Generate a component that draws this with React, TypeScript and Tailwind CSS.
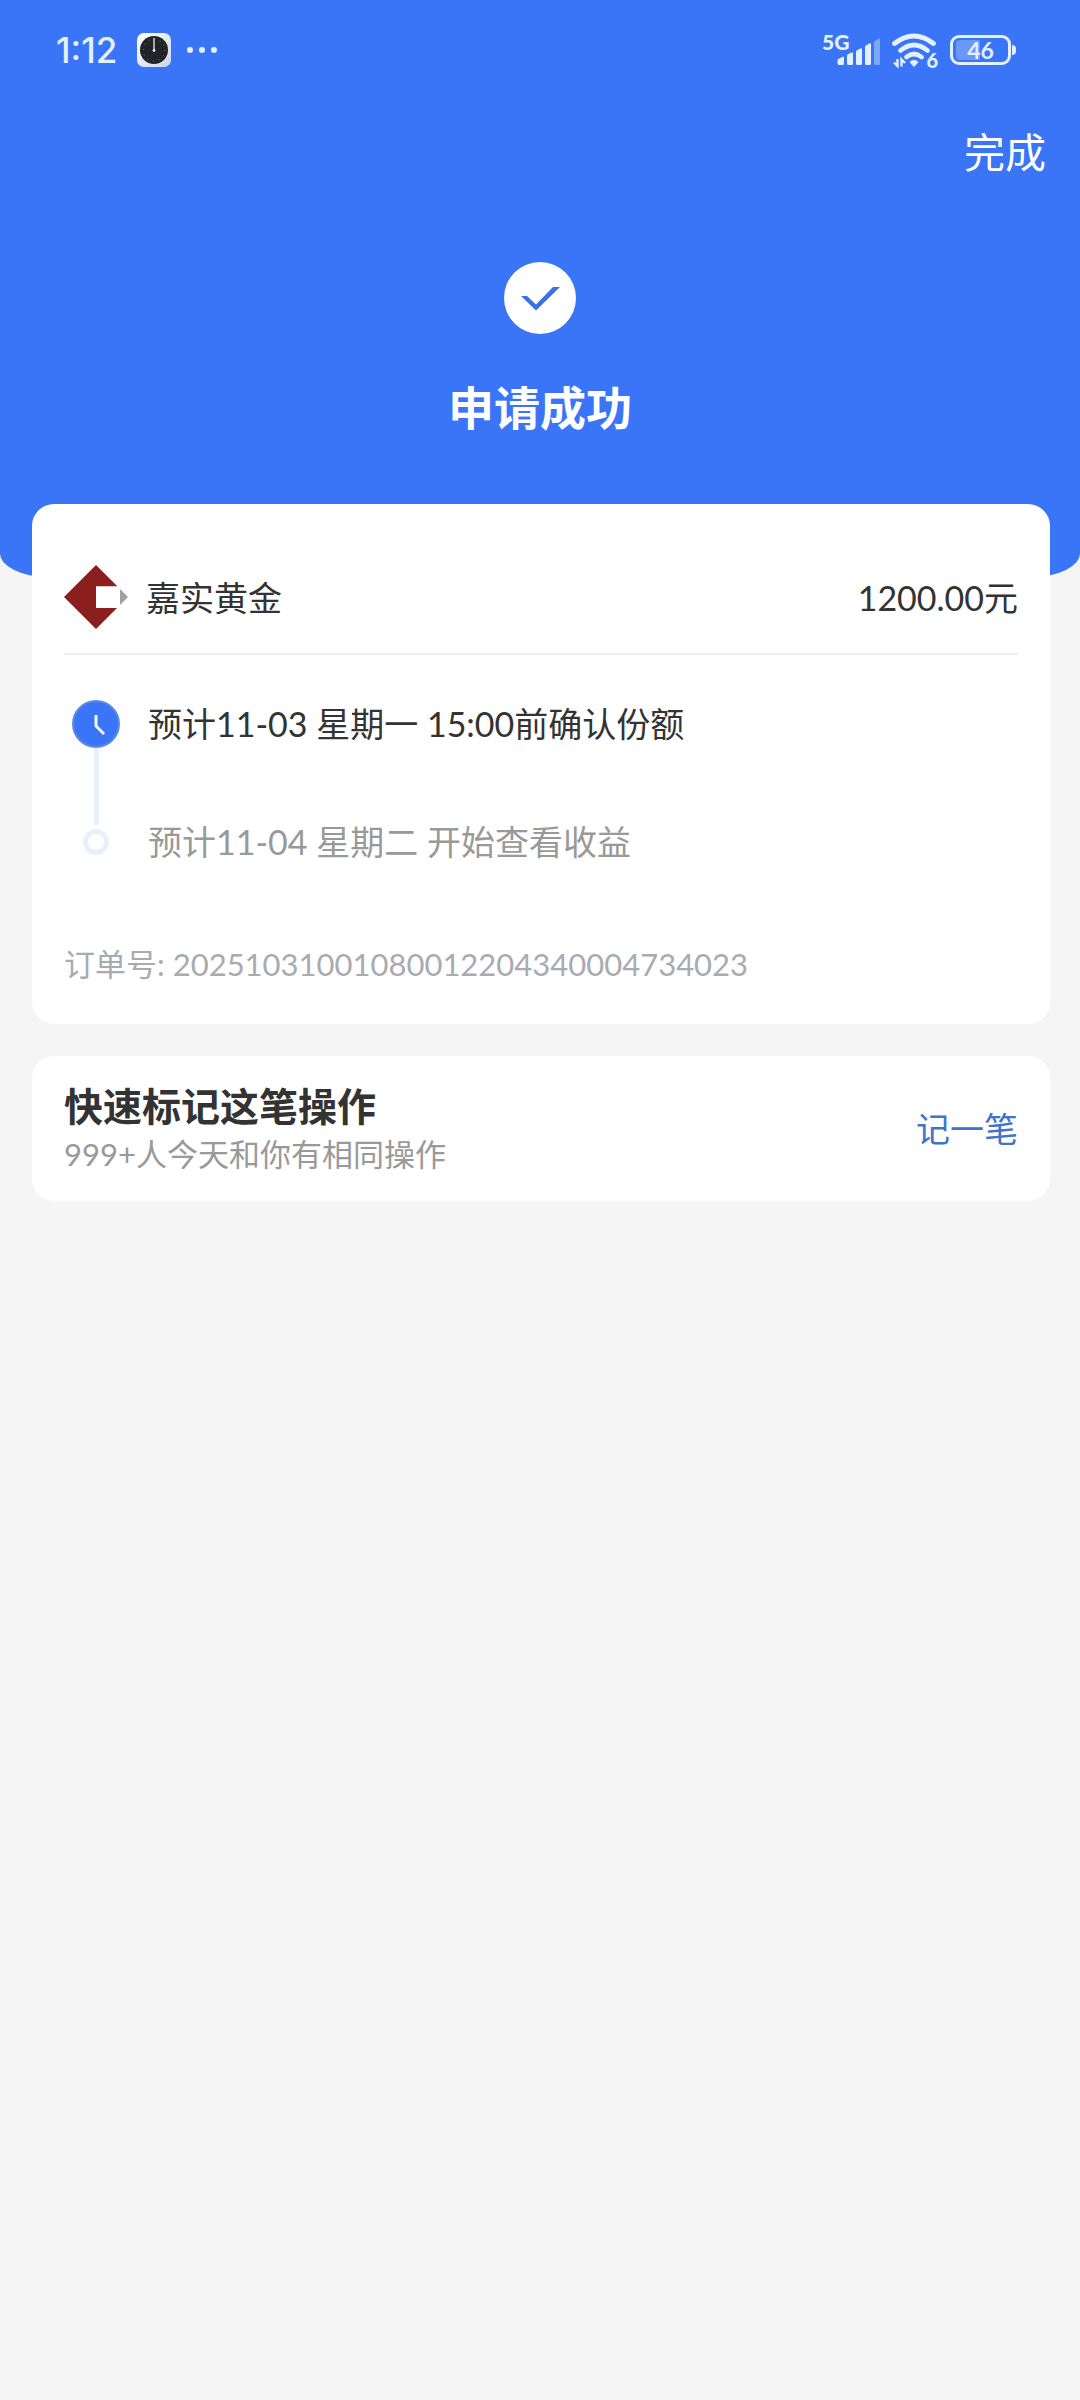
import React from 'react';

const steps = [
  { text: '预计11-03 星期一 15:00前确认份额', active: true },
  { text: '预计11-04 星期二 开始查看收益', active: false },
];

function AppBadge() {
  return (
    <svg width="34" height="34" viewBox="0 0 34 34" aria-hidden="true">
      <defs>
        <linearGradient id="badge" x1="0" y1="0" x2="1" y2="1">
          <stop offset="0" stopColor="#ffffff" />
          <stop offset="1" stopColor="#c9d6ee" />
        </linearGradient>
      </defs>
      <rect width="34" height="34" rx="7" fill="url(#badge)" />
      <circle cx="17" cy="17" r="14" fill="#222326" />
      <circle cx="17" cy="17" r="11" fill="none" stroke="#8b8d92" strokeWidth="0.9" strokeDasharray="0.9 4.86" />
      <path d="M17 5v13" stroke="#c4c6ca" strokeWidth="1.6" />
      <circle cx="17" cy="17.5" r="1.4" fill="#e8e8e8" />
    </svg>
  );
}

function Signal() {
  return (
    <div className="relative h-9 w-[58px]">
      <span className="absolute left-0 top-0 text-[21px] leading-[20px] font-black">5G</span>
      <svg className="absolute inset-0" width="58" height="36" viewBox="0 0 58 36" fill="#e3f0ff" aria-hidden="true">
        <path d="M15.500 31v-2.500q0-1 1-1.400l4-2.300q1.500-.6 1.500 1v5.700q0 1.500-1.500 1.500h-3.500q-1.500 0-1.500-2z" />
        <path d="M25 31.500v-7.500q0-1.200 1-1.700l3.400-1.700q1.600-.6 1.600 1v9.900q0 1.500-1.500 1.500h-3q-1.500 0-1.500-1.500z" />
        <path d="M34 31.500v-11.500q0-1.200 1-1.700l3.400-1.900q1.600-.6 1.600 1v14.100q0 1.500-1.500 1.500h-3q-1.500 0-1.500-1.500z" />
        <path d="M43 31.500v-16.300q0-1.200 1-1.700l3.400-2.100q1.600-.6 1.600 1v19.100q0 1.500-1.500 1.500h-3q-1.500 0-1.500-1.500z" />
        <path opacity=".4" d="M52 31.500v-20.800q0-1.200 1-1.800l3.400-2.200q1.600-.6 1.600 1v23.800q0 1.500-1.500 1.500h-3q-1.500 0-1.500-1.500z" />
      </svg>
    </div>
  );
}

function Wifi() {
  return (
    <div className="relative h-9 w-[46px]">
      <svg width="44" height="36" viewBox="0 0 44 36" fill="none" stroke="#e3f0ff" aria-hidden="true">
        <path d="M2.500 11.500q19.500-15 39 0" strokeWidth="4.800" strokeLinecap="round" />
        <path d="M8.500 18.500q13.500-11 27 0" strokeWidth="4.800" strokeLinecap="round" />
        <path d="M14.500 25q7.500-6 15 0" strokeWidth="4.800" strokeLinecap="round" />
        <path d="M18.500 30q3.500-2.500 7 0l-3.500 4z" fill="#e3f0ff" strokeWidth="1.500" strokeLinejoin="round" />
        <path d="M5.500 27v7l-3.500-3.500M9.500 34.500v-7l3.500 3.500" strokeWidth="2.400" />
      </svg>
      <span className="absolute right-0 bottom-0 text-[20px] leading-[16px] font-black">6</span>
    </div>
  );
}

function Battery() {
  return (
    <div className="flex items-center gap-px">
      <div className="relative flex h-[30px] w-[61px] items-center justify-center rounded-[9px] border-[3px] border-[#e3f0ff]">
        <span className="absolute inset-y-[2px] left-[3px] w-6 rounded-l-[4px] bg-white/25" />
        <span className="relative text-[23px] leading-none font-bold">46</span>
      </div>
      <span className="h-[10px] w-1 rounded-r-full bg-[#e3f0ff]" />
    </div>
  );
}

function StatusBar() {
  return (
    <div className="flex h-[100px] items-center justify-between pr-16 pl-14 text-[#e3f0ff]">
      <div className="flex items-center gap-4">
        <span className="pr-1 font-['Inter',sans-serif] text-[35px] leading-none font-medium">1:12</span>
        <AppBadge />
        <div className="flex gap-[6px]">
          <span className="size-[6px] rounded-full bg-[#e3f0ff]" />
          <span className="size-[6px] rounded-full bg-[#e3f0ff]" />
          <span className="size-[6px] rounded-full bg-[#e3f0ff]" />
        </div>
      </div>
      <div className="flex items-center gap-3">
        <Signal />
        <Wifi />
        <Battery />
      </div>
    </div>
  );
}

function FundLogo() {
  return (
    <svg width="64" height="64" viewBox="0 0 64 64" aria-hidden="true">
      <path d="M32 0 53.300 21.300H32V43H53L32 64 0 32z" fill="#8b1f1e" />
      <path d="M56 24l8 8-8 8z" fill="#a0a0a0" />
    </svg>
  );
}

export default function App() {
  return (
    <div className="min-h-screen bg-[#f5f5f5] font-['Lato','Noto_Sans_CJK_SC',sans-serif] text-[#333]">
      <header className="rounded-b-[48px_24px] bg-[#3975f6] pb-[139px] text-white">
        <StatusBar />
        <div className="flex justify-end px-[34px]">
          <button type="button" className="h-[106px] text-[41px] leading-[106px]">完成</button>
        </div>
        <div className="flex flex-col items-center pt-14">
          <svg width="72" height="72" viewBox="0 0 72 72" aria-hidden="true">
            <circle cx="36" cy="36" r="36" fill="#fff" />
            <path d="M17 34h6l9 8.500L49 25h7L32 48.500z" fill="#3b72dc" />
          </svg>
          <h1 className="mt-11 text-[46px] leading-[60px] font-bold">申请成功</h1>
        </div>
      </header>

      <main className="-mt-[73px] space-y-8 pr-[30px] pl-8">
        <section className="rounded-[22px] bg-white px-8 pb-9">
          <div className="flex h-[151px] items-center justify-between border-b-2 border-[#eee] pt-[37px] text-[34px]">
            <div className="flex items-center gap-[18px]">
              <FundLogo />
              <h2>嘉实黄金</h2>
            </div>
            <span>1200.00元</span>
          </div>

          <ol className="pt-[45px] text-[34px] leading-[48px]">
            {steps.map((step) => (
              <li key={step.text} className="flex gap-7 pl-2">
                <div className="flex w-12 flex-col items-center">
                  {step.active ? (
                    <>
                      <svg className="shrink-0" width="48" height="48" viewBox="0 0 48 48" aria-hidden="true">
                        <circle cx="24" cy="24" r="23" fill="#3975f6" stroke="#5f8be0" strokeWidth="2" />
                        <path d="M24 15v11l8 8" fill="none" stroke="#f0f6ff" strokeWidth="3" />
                      </svg>
                      <span className="-mb-[7px] w-[5px] grow bg-[#e8f0fc]" />
                    </>
                  ) : (
                    <span className="mt-[11px] size-[26px] rounded-full border-[5px] border-[#e8f0fc]" />
                  )}
                </div>
                <p className={step.active ? 'pb-[70px]' : 'text-[#999]'}>{step.text}</p>
              </li>
            ))}
          </ol>

          <p className="mt-[74px] text-[31px] leading-[48px] text-[#a8abb0]">订单号: 20251031001080012204340004734023</p>
        </section>

        <section className="flex items-center justify-between rounded-[22px] bg-white px-8 py-6">
          <div>
            <h2 className="text-[39px] leading-[52px] font-bold">快速标记这笔操作</h2>
            <p className="text-[31px] leading-[45px] text-[#999]">999+人今天和你有相同操作</p>
          </div>
          <button type="button" className="text-[34px] leading-[48px] text-[#4074cc]">记一笔</button>
        </section>
      </main>
    </div>
  );
}
